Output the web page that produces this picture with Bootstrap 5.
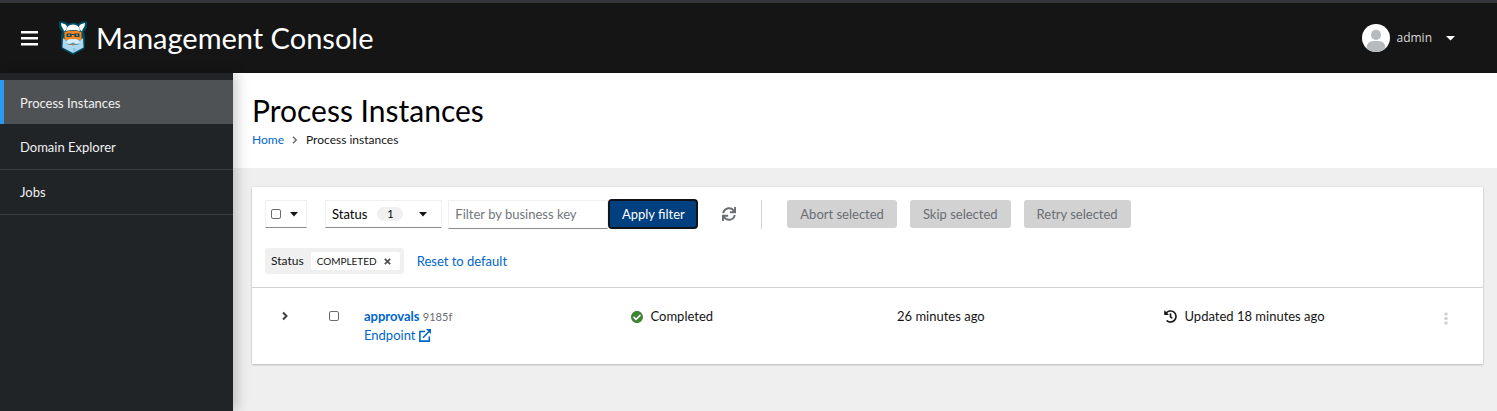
<!DOCTYPE html>
<html lang="en">
<head>
<meta charset="utf-8">
<meta name="viewport" content="width=device-width, initial-scale=1">
<title>Management Console</title>
<link rel="stylesheet" href="https://cdn.jsdelivr.net/npm/bootstrap@5.3.0/dist/css/bootstrap.min.css">
<style>
  body { font-family: Lato, "Open Sans", sans-serif; font-size: 13px; line-height: 20px; color: #151515; background: #efefef; }
  a { color: #06c; text-decoration: none; }
  svg { display: block; flex-shrink: 0; }
  .plain-btn { border: 0; padding: 0; background: none; color: inherit; }

  .masthead { background: #151515; border-top: 3px solid #34343c; height: 73px; color: #fff; padding: 0 42px 0 20px; }
  .brand-name { font-size: 29px; line-height: 36px; color: #fff; }
  .user-menu { font-family: "Open Sans", sans-serif; font-size: 12px; color: #d8d8d8; gap: 6px; }

  .side-nav { width: 233px; background: #212427; padding-top: 7px; box-shadow: 4px 0 12px rgba(3,3,3,.2); z-index: 1; }
  .side-nav .nav-link { color: #f0f0f0; padding: 12px 20px; border-bottom: 1px solid #3c3f42; }
  .side-nav .nav-link.active { background: #4f5255; border-left: 4px solid #2b9af3; border-bottom: 0; padding: 13px 20px 11px 16px; margin-bottom: 1px; }

  .page-head { background: #fff; padding: 19px 19px 18px; }
  .page-head h1 { font-size: 30px; line-height: 36px; font-weight: 400; color: #000; margin: 0 0 2px; }
  .crumbs { font-size: 12px; }

  .panel { background: #fff; margin: 19px 14px 0 19px; box-shadow: 0 1px 2px rgba(3,3,3,.2), 0 0 2px rgba(3,3,3,.1); }
  .toolbar { padding: 12px 13px 13px; border-bottom: 1px solid #d2d2d2; }
  .box { height: 28px; border: 1px solid #f0f0f0; border-bottom-color: #8a8d90; background: #fff; }
  .select-menu { gap: 9px; padding: 0 8px 0 5px; }
  .status-menu { gap: 10px; padding: 0 14px 0 6px; margin: 0 6px 0 18px; }
  .count { background: #f0f0f0; border-radius: 30px; font-size: 11px; line-height: 14px; width: 26px; margin-right: 6px; text-align: center; }
  .key-input { width: 160px; height: 29px; padding: 0 6px; outline: 0; }
  .key-input::placeholder { color: #72767b; opacity: 1; }
  .apply { background: #004080; color: #fff; border: 2px solid #101418; border-radius: 4px; height: 30px; width: 90px; padding: 0; }
  .off { background: #d2d2d2; color: #6a6e73; border: 0; border-radius: 3px; height: 28px; padding: 0 13px; }
  .rule { width: 1px; height: 29px; background: #d2d2d2; margin: 0 25px; }
  .actions { gap: 13px; }
  .tick { appearance: none; width: 10px; height: 10px; margin: 0; border: 1px solid #6a6e73; border-radius: 2px; background: #fff; }
  .tick:checked { background: #06c; }
  .filters { margin-top: 19px; gap: 13px; }
  .chips { background: #f0f0f0; border-radius: 3px; height: 26px; padding: 0 4px 0 6px; font-size: 12px; gap: 7px; }
  .chip { background: #fff; border-radius: 2px; height: 18px; padding: 0 9px 0 6px; font-size: 10px; line-height: 18px; gap: 7px; }
  .reset { color: #06c; }

  .entry { padding: 19px 35px 19px 30px; line-height: 19px; }
  .entry .tick { margin: 4px 25px 0 41px; }
  .entry-id { font-size: 11px; color: #6a6e73; }
  .kebab { margin-left: 14px; }
</style>
</head>
<body class="d-flex flex-column min-vh-100">
<header class="masthead d-flex align-items-center">
  <button class="plain-btn" type="button" aria-label="Global navigation">
    <svg width="18" height="15" viewBox="0 0 18 15" fill="#fff"><rect x="1" width="17" height="2.5"/><rect x="1" y="6" width="17" height="2.5"/><rect x="1" y="12" width="17" height="2.5"/></svg>
  </button>
  <a class="d-flex align-items-center ms-3" href="#">
    <svg class="ms-1" width="30" height="34" viewBox="0 0 30 34">
      <path d="M1 .5l5 0 4 2.500q5-2.500 10 0L24 .5h5v3.500q0 4-3 6.500l1 5-.5 12L15 34 3.500 27.500 3 15.500l1-5Q1 8 1 4z" fill="#004c63"/>
      <path d="M3 2q6 1 6 4-.5 3-3 4.500 0-2-1.500-3.500Q3 5 3 2zM27 2q-6 1-6 4 .5 3 3 4.500 0-2 1.500-3.500Q27 5 27 2z" fill="#fff"/>
      <path d="M8 10q.5-6.500 7-6.500t7 6.500q-7-2-14 0z" fill="#fff"/>
      <path d="M6.500 11q8.500-2.500 17 0v8h-17z" fill="#f8841f"/>
      <path d="M8.500 12.500h5v3.500h-5zM16.500 12.500h5v3.500h-5zM13 13h4v1h-4z" fill="#0b4b61"/>
      <path d="M10 13.500h2v1.500h-2zM18 13.500h2v1.500h-2z" fill="#d77a2a"/>
      <path d="M5 17l3 2.500 4-1.500h6l4 1.500L25 17l.5 9.500L15 32 4.500 26.500z" fill="#acd8f0"/>
      <path d="M8.500 22q.5-4.500 6.500-3.500 6-1 6.500 3.500-3.500 2-6.500-.5-3 2.500-6.500.5z" fill="#d8eef8"/>
      <path d="M8.500 22q3.500 2 6.500-.5 3 2.500 6.500.5-.5 2-3.500 2h-6q-3 0-3.500-2z" fill="#4f94b0"/>
      <path d="M13 23h4l-2 1.800z" fill="#d9782c"/>
      <path d="M15 27l4 1-4 3z" fill="#8cc4e0"/>
    </svg>
    <span class="brand-name ms-2">Management Console</span>
  </a>
  <button class="plain-btn user-menu ms-auto d-flex align-items-center" type="button">
    <svg width="28" height="28" viewBox="0 0 36 36"><defs><clipPath id="face"><circle cx="18" cy="18" r="18"/></clipPath></defs><g clip-path="url(#face)"><path fill="#fff" d="M0 0h36v36H0z"/><circle cx="18" cy="14" r="6.500" fill="#b8bbbe"/><path d="M6 36v-5q0-9 9-9h6q9 0 9 9v5z" fill="#b8bbbe"/></g></svg>
    <span>admin</span>
    <svg class="ms-2" width="9" height="5" viewBox="0 0 9 5" fill="#fff"><path d="M0 0h9L4.500 4.500z"/></svg>
  </button>
</header>

<div class="d-flex flex-grow-1">
  <nav class="side-nav nav flex-column flex-nowrap flex-shrink-0" aria-label="Main">
    <a class="nav-link active" href="#" aria-current="page">Process Instances</a>
    <a class="nav-link" href="#">Domain Explorer</a>
    <a class="nav-link" href="#">Jobs</a>
  </nav>

  <main class="flex-grow-1">
    <section class="page-head">
      <h1>Process Instances</h1>
      <nav class="crumbs d-flex align-items-center" aria-label="Breadcrumb">
        <a href="#">Home</a>
        <svg class="mx-2" width="6" height="8" viewBox="0 0 6 8" fill="none" stroke="#6a6e73" stroke-width="1.500"><path d="M1 .8L4.200 4 1 7.200"/></svg>
        <span>Process instances</span>
      </nav>
    </section>

    <section class="panel">
      <div class="toolbar">
        <div class="d-flex align-items-center">
          <div class="box select-menu d-flex align-items-center">
            <input class="tick" type="checkbox" aria-label="Select all">
            <button class="plain-btn" type="button" aria-label="Selection options"><svg width="8" height="5" viewBox="0 0 8 5"><path d="M0 0h8L4 4.500z" fill="#151515"/></svg></button>
          </div>
          <button class="box status-menu d-flex align-items-center" type="button">
            <span>Status</span><span class="count">1</span>
            <svg width="8" height="5" viewBox="0 0 8 5"><path d="M0 0h8L4 4.500z" fill="#151515"/></svg>
          </button>
          <input class="box key-input" type="text" aria-label="Business key" placeholder="Filter by business key">
          <button class="apply" type="button">Apply filter</button>
          <button class="plain-btn ms-4" type="button" aria-label="Refresh"><svg width="14" height="14" viewBox="0 0 512 512" fill="#6a6e73"><path d="M440.650 12.570l4 82.770A247.160 247.160 0 0 0 255.830 8C134.730 8 33.910 94.920 12.290 209.820A12 12 0 0 0 24.090 224h49.050a12 12 0 0 0 11.670-9.260 175.910 175.910 0 0 1 317-56.940l-101.460-4.860a12 12 0 0 0-12.570 12v47.410a12 12 0 0 0 12 12H500a12 12 0 0 0 12-12V12a12 12 0 0 0-12-12h-47.370a12 12 0 0 0-11.980 12.570zM255.830 432a175.610 175.610 0 0 1-146-77.800l101.800 4.870a12 12 0 0 0 12.570-12v-47.400a12 12 0 0 0-12-12H12a12 12 0 0 0-12 12V500a12 12 0 0 0 12 12h47.350a12 12 0 0 0 12-12.600l-4.150-82.570A247.170 247.170 0 0 0 255.830 504c121.110 0 221.930-86.920 243.550-201.820a12 12 0 0 0-11.800-14.180h-49.050a12 12 0 0 0-11.670 9.260A175.860 175.860 0 0 1 255.830 432z"/></svg></button>
          <span class="rule"></span>
          <div class="actions d-flex">
            <button class="off" type="button" disabled>Abort selected</button>
            <button class="off" type="button" disabled>Skip selected</button>
            <button class="off" type="button" disabled>Retry selected</button>
          </div>
        </div>
        <div class="filters d-flex align-items-center">
          <div class="chips d-flex align-items-center">
            <span>Status</span>
            <span class="chip d-flex align-items-center">COMPLETED
              <button class="plain-btn" type="button" aria-label="Remove COMPLETED"><svg width="7" height="7" viewBox="0 0 7 7" stroke="#4f5255" stroke-width="1.800"><path d="M.8.8l5.400 5.400M6.200.8L.8 6.200"/></svg></button>
            </span>
          </div>
          <button class="plain-btn reset" type="button">Reset to default</button>
        </div>
      </div>

      <div class="entry d-flex align-items-start">
        <button class="plain-btn mt-1" type="button" aria-label="Show details"><svg width="6" height="10" viewBox="0 0 6 10" fill="none" stroke="#3c3f42" stroke-width="2"><path d="M1 1.500L4.500 5 1 8.500"/></svg></button>
        <input class="tick" type="checkbox" aria-label="Select approvals 9185f">
        <div class="row gx-0 flex-grow-1">
          <div class="col">
            <div><a href="#"><strong>approvals</strong></a> <span class="entry-id">9185f</span></div>
            <a class="d-flex align-items-center" href="#">Endpoint
              <svg class="ms-1" width="12" height="13" viewBox="0 0 12 13" fill="none" stroke="#06c" stroke-width="1.600"><path d="M6 2.500H.9v9.600h9.400V7.500M4 8.700L10 2.500"/><path d="M7 0h5v5z" fill="#06c" stroke="none"/></svg>
            </a>
          </div>
          <div class="col d-flex align-items-center align-self-start">
            <svg width="12" height="12" viewBox="8 8 496 496" fill="#3e8635"><path d="M504 256c0 136.967-111.033 248-248 248S8 392.967 8 256 119.033 8 256 8s248 111.033 248 248zM227.314 387.314l184-184c6.248-6.248 6.248-16.379 0-22.627l-22.627-22.627c-6.248-6.249-16.379-6.249-22.628 0L216 308.118l-70.059-70.059c-6.248-6.248-16.379-6.248-22.628 0l-22.627 22.627c-6.248 6.248-6.248 16.379 0 22.627l104 104c6.249 6.249 16.379 6.249 22.628.001z"/></svg>
            <span class="ms-2">Completed</span>
          </div>
          <div class="col">26 minutes ago</div>
          <div class="col d-flex align-items-center align-self-start">
            <svg width="13" height="13" viewBox="0 0 512 512" fill="#151515"><path d="M504 255.531c.253 136.640-111.180 248.372-247.820 248.468-59.015.042-113.223-20.530-155.822-54.911-11.077-8.940-11.905-25.541-1.839-35.607l11.267-11.267c8.609-8.609 22.353-9.551 31.891-1.984C173.062 425.135 212.781 440 256 440c101.705 0 184-82.311 184-184 0-101.705-82.311-184-184-184-48.814 0-93.149 18.969-126.068 49.932l50.754 50.754c10.080 10.080 2.941 27.314-11.313 27.314H24c-8.837 0-16-7.163-16-16V38.627c0-14.254 17.234-21.393 27.314-11.314l49.372 49.372C129.209 34.136 189.552 8 256 8c136.810 0 247.747 110.780 248 247.531zm-180.912 78.784l9.823-12.630c8.138-10.463 6.253-25.542-4.210-33.679L288 256.349V152c0-13.255-10.745-24-24-24h-16c-13.255 0-24 10.745-24 24v135.651l65.409 50.874c10.463 8.137 25.541 6.253 33.679-4.210z"/></svg>
            <span class="ms-2">Updated 18 minutes ago</span>
          </div>
        </div>
        <button class="plain-btn kebab mt-1" type="button" aria-label="Actions" disabled><svg width="4" height="14" viewBox="0 0 4 14" fill="#d2d2d2"><circle cx="2" cy="3" r="1.800"/><circle cx="2" cy="7.500" r="1.800"/><circle cx="2" cy="12" r="1.800"/></svg></button>
      </div>
    </section>
  </main>
</div>
<script src="https://cdn.jsdelivr.net/npm/bootstrap@5.3.0/dist/js/bootstrap.bundle.min.js"></script>
</body>
</html>
